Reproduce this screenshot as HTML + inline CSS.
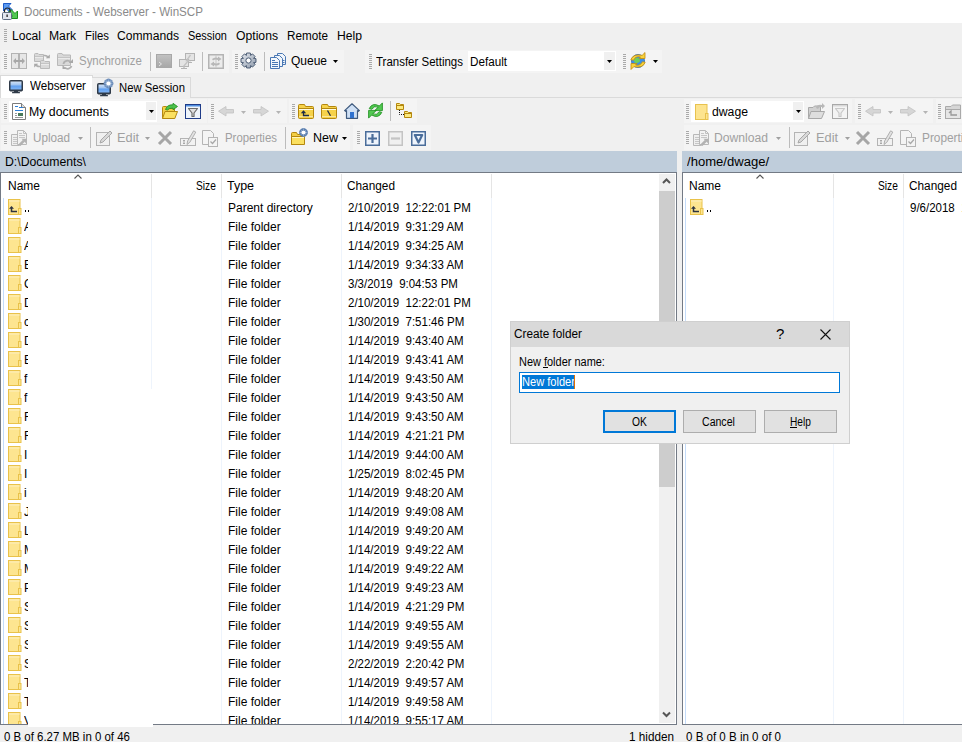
<!DOCTYPE html>
<html><head><meta charset="utf-8"><title>WinSCP</title>
<style>
html,body{margin:0;padding:0}
body{width:962px;height:742px;overflow:hidden;position:relative;background:#f0f0f0;font-family:"Liberation Sans",sans-serif}
.a{position:absolute}
.t{position:absolute;white-space:pre;font-size:12px;line-height:14px;transform-origin:0 0}
svg.a{overflow:visible}
</style></head><body>
<div class="a" style="left:0px;top:0px;width:962px;height:23px;background:#fff"></div>
<svg class="a" style="left:2px;top:3px" width="17" height="17" viewBox="0 0 17 17">
<path d="M1.5 0.5H9L6.5 3 10.5 7 8 9.5 4 5.5 1.5 8Z" fill="#5a9af2" stroke="#1e5bc6" stroke-width="1"/>
<path d="M15.5 8V15.5H8L10.5 13 6.5 9 9 6.5 13 10.5Z" fill="#52c852" stroke="#1a8f1a" stroke-width="1"/>
<path d="M2.5 9.5V7.8A2.8 2.8 0 0 1 8.1 7.8V9.5" fill="none" stroke="#222" stroke-width="1.2"/>
<rect x="0.5" y="9.5" width="9" height="7" rx="1" fill="#e2e6ee" stroke="#5d6b80" stroke-width="1"/>
<rect x="4.5" y="11.5" width="1.2" height="2.5" fill="#111"/>
</svg>
<div class="t" style="left:24px;top:5px;color:#8a8a8a;transform:scaleX(0.9666);">Documents - Webserver - WinSCP</div>
<div class="a" style="left:4px;top:29px;width:3px;height:1px;background:#a9a9a9"></div>
<div class="a" style="left:4px;top:31px;width:3px;height:1px;background:#a9a9a9"></div>
<div class="a" style="left:4px;top:33px;width:3px;height:1px;background:#a9a9a9"></div>
<div class="a" style="left:4px;top:35px;width:3px;height:1px;background:#a9a9a9"></div>
<div class="a" style="left:4px;top:37px;width:3px;height:1px;background:#a9a9a9"></div>
<div class="a" style="left:4px;top:39px;width:3px;height:1px;background:#a9a9a9"></div>
<div class="a" style="left:4px;top:41px;width:3px;height:1px;background:#a9a9a9"></div>
<div class="t" style="left:12px;top:29px;color:#000;transform:scaleX(1.0113);">Local</div>
<div class="t" style="left:49px;top:29px;color:#000;transform:scaleX(1.0128);">Mark</div>
<div class="t" style="left:85px;top:29px;color:#000;transform:scaleX(0.9448);">Files</div>
<div class="t" style="left:117px;top:29px;color:#000;transform:scaleX(1.0106);">Commands</div>
<div class="t" style="left:188px;top:29px;color:#000;transform:scaleX(0.9112);">Session</div>
<div class="t" style="left:236px;top:29px;color:#000;transform:scaleX(1.0159);">Options</div>
<div class="t" style="left:287px;top:29px;color:#000;transform:scaleX(0.9749);">Remote</div>
<div class="t" style="left:337px;top:29px;color:#000;transform:scaleX(1.0132);">Help</div>
<div class="a" style="left:1px;top:50px;width:228px;height:23px;background:#f4f4f4"></div>
<div class="a" style="left:232px;top:50px;width:112px;height:23px;background:#f4f4f4"></div>
<div class="a" style="left:365px;top:50px;width:257px;height:23px;background:#f4f4f4"></div>
<div class="a" style="left:620px;top:50px;width:42px;height:23px;background:#f4f4f4"></div>
<div class="a" style="left:4px;top:54px;width:3px;height:1px;background:#a9a9a9"></div>
<div class="a" style="left:4px;top:56px;width:3px;height:1px;background:#a9a9a9"></div>
<div class="a" style="left:4px;top:58px;width:3px;height:1px;background:#a9a9a9"></div>
<div class="a" style="left:4px;top:60px;width:3px;height:1px;background:#a9a9a9"></div>
<div class="a" style="left:4px;top:62px;width:3px;height:1px;background:#a9a9a9"></div>
<div class="a" style="left:4px;top:64px;width:3px;height:1px;background:#a9a9a9"></div>
<div class="a" style="left:4px;top:66px;width:3px;height:1px;background:#a9a9a9"></div>
<div class="a" style="left:4px;top:68px;width:3px;height:1px;background:#a9a9a9"></div>
<svg class="a" style="left:11px;top:53px" width="17" height="17" viewBox="0 0 17 17"><rect x="0.5" y="0.5" width="15" height="15" fill="#e6e6e6" stroke="#b4b4b4"/><rect x="7" y="1" width="2" height="14" fill="#b4b4b4"/>
<path d="M2 8L5 5V7H11V5L14 8 11 11V9H5V11Z" fill="#a8a8a8"/></svg>
<svg class="a" style="left:34px;top:53px" width="17" height="17" viewBox="0 0 17 17"><path d="M0.5 8.5V1.5Q0.5 0.5 1.5 0.5H4L5 1.5H9.5V8.5Z" fill="#d9d9d9" stroke="#b9b9b9"/><path d="M1 3.5H9" stroke="#c4c4c4"/><rect x="1" y="4" width="8" height="1" fill="#eaeaea"/><path d="M6.5 15.5V8.5Q6.5 7.5 7.5 7.5H10L11 8.5H15.5V15.5Z" fill="#d9d9d9" stroke="#b9b9b9"/><path d="M7 10.5H15" stroke="#c4c4c4"/><rect x="7" y="11" width="8" height="1" fill="#eaeaea"/><path d="M10 2.5Q13.5 2.2 14 5" fill="none" stroke="#b0b0b0" stroke-width="1.6"/><path d="M11.8 5.2H15.8V1.5Z" fill="#a8a8a8"/><path d="M6 13.5Q2.5 13.8 2 11" fill="none" stroke="#b0b0b0" stroke-width="1.6"/><path d="M4.2 10.8H0.2V14.5Z" fill="#a8a8a8"/></svg>
<svg class="a" style="left:57px;top:53px" width="17" height="17" viewBox="0 0 17 17"><path d="M0.5 12.5V1.5Q0.5 0.5 1.5 0.5H5L6 2H13.5V12.5Z" fill="#d9d9d9" stroke="#b9b9b9"/><path d="M1 4.5H13" stroke="#c4c4c4"/><rect x="1" y="5" width="12" height="1" fill="#eaeaea"/><path d="M6.5 11A3.8 3.8 0 0 1 13.5 9.5" fill="none" stroke="#b0b0b0" stroke-width="1.8"/><path d="M12 10H16V6Z" fill="#a8a8a8"/><path d="M14.5 13A3.8 3.8 0 0 1 8 14.5" fill="none" stroke="#b0b0b0" stroke-width="1.8"/><path d="M9.5 14H5.5V10Z" fill="#a8a8a8" transform="translate(0 2)"/></svg>
<div class="t" style="left:79px;top:54px;color:#a0a0a0;transform:scaleX(0.9532);">Synchronize</div>
<div class="a" style="left:150px;top:52px;width:1px;height:19px;background:#bcbcbc"></div>
<svg class="a" style="left:156px;top:54px" width="17" height="15" viewBox="0 0 17 15"><defs><linearGradient id="tg" x1="0" y1="0" x2="0" y2="1"><stop offset="0" stop-color="#c4c4c4"/><stop offset="1" stop-color="#a6a6a6"/></linearGradient></defs><rect x="0" y="0" width="16" height="14" fill="url(#tg)"/><rect x="0.5" y="0.5" width="15" height="13" fill="none" stroke="#a8a8a8"/><path d="M3 8L5.5 10 3 12" fill="none" stroke="#e6e6e6" stroke-width="1"/></svg>
<svg class="a" style="left:179px;top:53px" width="17" height="17" viewBox="0 0 17 17"><rect x="6.5" y="0.5" width="9" height="7" fill="#e4e4e4" stroke="#b4b4b4"/><path d="M11 8.5V9.5M9.5 9.5H13" stroke="#b4b4b4"/><rect x="0.5" y="6.5" width="9" height="7" fill="#e4e4e4" stroke="#b4b4b4"/><path d="M5 14V15M2 15.5H8" stroke="#b4b4b4" stroke-width="1.2"/><path d="M11.5 2L7.5 7.5H9.5L4.5 13.5" fill="none" stroke="#c2c2c2" stroke-width="1.3"/></svg>
<div class="a" style="left:202px;top:52px;width:1px;height:19px;background:#bcbcbc"></div>
<svg class="a" style="left:208px;top:54px" width="16" height="15" viewBox="0 0 16 15"><rect x="0.75" y="0.75" width="14.5" height="13.5" fill="#ececec" stroke="#b4b4b4" stroke-width="1.5"/><path d="M8 1V14" stroke="#c8c8c8"/><path d="M4 5Q7 2.5 10 4V2.5L13.5 5 10 7.5V6Q7 5 5 6.5Z" fill="#b8b8b8"/><path d="M12 10Q9 12.5 6 11V12.5L2.5 10 6 7.5V9Q9 10 11 8.5Z" fill="#b8b8b8"/></svg>
<div class="a" style="left:235px;top:54px;width:3px;height:1px;background:#a9a9a9"></div>
<div class="a" style="left:235px;top:56px;width:3px;height:1px;background:#a9a9a9"></div>
<div class="a" style="left:235px;top:58px;width:3px;height:1px;background:#a9a9a9"></div>
<div class="a" style="left:235px;top:60px;width:3px;height:1px;background:#a9a9a9"></div>
<div class="a" style="left:235px;top:62px;width:3px;height:1px;background:#a9a9a9"></div>
<div class="a" style="left:235px;top:64px;width:3px;height:1px;background:#a9a9a9"></div>
<div class="a" style="left:235px;top:66px;width:3px;height:1px;background:#a9a9a9"></div>
<div class="a" style="left:235px;top:68px;width:3px;height:1px;background:#a9a9a9"></div>
<svg class="a" style="left:240px;top:52px" width="17" height="17" viewBox="0 0 17 17"><defs><linearGradient id="gg" x1="0" y1="0" x2="1" y2="1"><stop offset="0" stop-color="#e4e8ee"/><stop offset="1" stop-color="#8e9aab"/></linearGradient></defs><path d="M6.22 3.39 L6.67 1.02 L10.33 1.02 L10.78 3.39 L10.50 3.27 L12.49 1.92 L15.08 4.51 L13.73 6.50 L13.61 6.22 L15.98 6.67 L15.98 10.33 L13.61 10.78 L13.73 10.50 L15.08 12.49 L12.49 15.08 L10.50 13.73 L10.78 13.61 L10.33 15.98 L6.67 15.98 L6.22 13.61 L6.50 13.73 L4.51 15.08 L1.92 12.49 L3.27 10.50 L3.39 10.78 L1.02 10.33 L1.02 6.67 L3.39 6.22 L3.27 6.50 L1.92 4.51 L4.51 1.92 L6.50 3.27Z" fill="url(#gg)" stroke="#4d5e75" stroke-width="1"/><circle cx="8.5" cy="8.5" r="2.6" fill="#fff" stroke="#4d5e75" stroke-width="1"/></svg>
<div class="a" style="left:264px;top:52px;width:1px;height:19px;background:#bcbcbc"></div>
<svg class="a" style="left:270px;top:53px" width="17" height="17" viewBox="0 0 17 17"><path d="M7.5 0.5H12.5L15.5 3.5V11.5H7.5Z" fill="#f0f5fb" stroke="#4a78b4"/><path d="M4.5 2.5H9.5L12.5 5.5V13.5H4.5Z" fill="#f0f5fb" stroke="#4a78b4"/><path d="M0.5 4.5H6.5L9.5 7.5V15.5H0.5Z" fill="#f4f8fc" stroke="#4a78b4"/><path d="M2 7.5H5M2 9.5H8M2 11.5H8M2 13.5H8" stroke="#4a78b4"/><path d="M13 7.5H14.5M13 9.5H14.5" stroke="#4a78b4"/></svg>
<div class="t" style="left:291px;top:54px;color:#000;">Queue</div>
<svg class="a" style="left:333px;top:60px" width="5" height="3" viewBox="0 0 5 3"><path d="M0 0H5L2.5 3Z" fill="#000"/></svg>
<div class="a" style="left:369px;top:54px;width:3px;height:1px;background:#a9a9a9"></div>
<div class="a" style="left:369px;top:56px;width:3px;height:1px;background:#a9a9a9"></div>
<div class="a" style="left:369px;top:58px;width:3px;height:1px;background:#a9a9a9"></div>
<div class="a" style="left:369px;top:60px;width:3px;height:1px;background:#a9a9a9"></div>
<div class="a" style="left:369px;top:62px;width:3px;height:1px;background:#a9a9a9"></div>
<div class="a" style="left:369px;top:64px;width:3px;height:1px;background:#a9a9a9"></div>
<div class="a" style="left:369px;top:66px;width:3px;height:1px;background:#a9a9a9"></div>
<div class="a" style="left:369px;top:68px;width:3px;height:1px;background:#a9a9a9"></div>
<div class="t" style="left:376px;top:55px;color:#000;transform:scaleX(0.9562);">Transfer Settings</div>
<div class="a" style="left:468px;top:51px;width:148px;height:20px;background:#fff"></div>
<div class="a" style="left:604px;top:52px;width:11px;height:18px;background:#f0f0f0"></div>
<svg class="a" style="left:607px;top:60px" width="5" height="3" viewBox="0 0 5 3"><path d="M0 0H5L2.5 3Z" fill="#000"/></svg>
<div class="t" style="left:470px;top:55px;color:#000;transform:scaleX(0.9722);">Default</div>
<div class="a" style="left:623px;top:54px;width:3px;height:1px;background:#a9a9a9"></div>
<div class="a" style="left:623px;top:56px;width:3px;height:1px;background:#a9a9a9"></div>
<div class="a" style="left:623px;top:58px;width:3px;height:1px;background:#a9a9a9"></div>
<div class="a" style="left:623px;top:60px;width:3px;height:1px;background:#a9a9a9"></div>
<div class="a" style="left:623px;top:62px;width:3px;height:1px;background:#a9a9a9"></div>
<div class="a" style="left:623px;top:64px;width:3px;height:1px;background:#a9a9a9"></div>
<div class="a" style="left:623px;top:66px;width:3px;height:1px;background:#a9a9a9"></div>
<div class="a" style="left:623px;top:68px;width:3px;height:1px;background:#a9a9a9"></div>
<svg class="a" style="left:629px;top:52px" width="18" height="18" viewBox="0 0 18 18"><circle cx="9" cy="9" r="6.6" fill="#3b8ee6" stroke="#2a68b8" stroke-width="0.7"/><path d="M4.5 7Q6 5 9 6T10.5 10Q8 11.5 5.5 10.5Z" fill="#6ccf5c"/><path d="M10.5 12Q13 11 14.8 12.5Q13 15 10.8 14.5Z" fill="#6ccf5c"/>
<path d="M1.8 7.8Q4 1.5 13.2 3.3L16 0.5V6.5H10L11.5 5Q6.5 3.8 4.6 8.2Z" fill="#f7d23c" stroke="#c48c0c" stroke-width="0.8" stroke-linejoin="round"/>
<path d="M16.2 10.2Q14 16.5 4.8 14.7L2 17.5V11.5H8L6.5 13Q11.5 14.2 13.4 9.8Z" fill="#f7d23c" stroke="#c48c0c" stroke-width="0.8" stroke-linejoin="round"/></svg>
<svg class="a" style="left:653px;top:60px" width="5" height="3" viewBox="0 0 5 3"><path d="M0 0H5L2.5 3Z" fill="#000"/></svg>
<div class="a" style="left:0px;top:97px;width:962px;height:1px;background:#dadada"></div>
<div class="a" style="left:0px;top:75px;width:93px;height:23px;background:#fff;box-sizing:border-box;border:1px solid #dadada;border-bottom:none"></div>
<div class="a" style="left:92px;top:77px;width:99px;height:21px;background:#f0f0f0;box-sizing:border-box;border:1px solid #dadada;border-bottom:none;border-left:none"></div>
<svg class="a" style="left:9px;top:80px" width="17" height="14" viewBox="0 0 17 14"><defs><linearGradient id="scr" x1="0" y1="0" x2="0" y2="1"><stop offset="0" stop-color="#d2e3f7"/><stop offset="0.45" stop-color="#9cc2f2"/><stop offset="0.55" stop-color="#5f9ff0"/><stop offset="1" stop-color="#7fb4f5"/></linearGradient></defs><rect x="0.5" y="0.5" width="13" height="10.5" rx="1" fill="#2f3a48" stroke="#2f3a48"/><rect x="1.5" y="1.5" width="11" height="8" fill="url(#scr)"/><rect x="5" y="11" width="4" height="1.2" fill="#2f3a48"/><rect x="3" y="12" width="8" height="1.3" rx="0.6" fill="#2f3a48"/></svg>
<div class="t" style="left:30px;top:79px;color:#000;transform:scaleX(0.9684);">Webserver</div>
<svg class="a" style="left:97px;top:83px" width="17" height="14" viewBox="0 0 17 14"><defs><linearGradient id="scr" x1="0" y1="0" x2="0" y2="1"><stop offset="0" stop-color="#d2e3f7"/><stop offset="0.45" stop-color="#9cc2f2"/><stop offset="0.55" stop-color="#5f9ff0"/><stop offset="1" stop-color="#7fb4f5"/></linearGradient></defs><rect x="0.5" y="0.5" width="13" height="10.5" rx="1" fill="#2f3a48" stroke="#2f3a48"/><rect x="1.5" y="1.5" width="11" height="8" fill="url(#scr)"/><rect x="5" y="11" width="4" height="1.2" fill="#2f3a48"/><rect x="3" y="12" width="8" height="1.3" rx="0.6" fill="#2f3a48"/><path d="M10.28 -2.24 L10.50 -3.99 L12.50 -3.99 L12.72 -2.24 L12.57 -2.30 L13.96 -3.38 L15.38 -1.96 L14.30 -0.57 L14.24 -0.72 L15.99 -0.50 L15.99 1.50 L14.24 1.72 L14.30 1.57 L15.38 2.96 L13.96 4.38 L12.57 3.30 L12.72 3.24 L12.50 4.99 L10.50 4.99 L10.28 3.24 L10.43 3.30 L9.04 4.38 L7.62 2.96 L8.70 1.57 L8.76 1.72 L7.01 1.50 L7.01 -0.50 L8.76 -0.72 L8.70 -0.57 L7.62 -1.96 L9.04 -3.38 L10.43 -2.30Z" fill="#8fabd0" stroke="#5a7fb0" stroke-width="0.8"/><circle cx="11.5" cy="0.5" r="2.1" fill="#fff"/></svg>
<div class="t" style="left:119px;top:81px;color:#000;transform:scaleX(0.9416);">New Session</div>
<div class="a" style="left:1px;top:99px;width:206px;height:24px;background:#f4f4f4"></div>
<div class="a" style="left:208px;top:99px;width:79px;height:24px;background:#f4f4f4"></div>
<div class="a" style="left:289px;top:99px;width:128px;height:24px;background:#f4f4f4"></div>
<div class="a" style="left:1px;top:125px;width:349px;height:25px;background:#f4f4f4"></div>
<div class="a" style="left:353px;top:125px;width:78px;height:25px;background:#f4f4f4"></div>
<div class="a" style="left:4px;top:104px;width:3px;height:1px;background:#a9a9a9"></div>
<div class="a" style="left:4px;top:106px;width:3px;height:1px;background:#a9a9a9"></div>
<div class="a" style="left:4px;top:108px;width:3px;height:1px;background:#a9a9a9"></div>
<div class="a" style="left:4px;top:110px;width:3px;height:1px;background:#a9a9a9"></div>
<div class="a" style="left:4px;top:112px;width:3px;height:1px;background:#a9a9a9"></div>
<div class="a" style="left:4px;top:114px;width:3px;height:1px;background:#a9a9a9"></div>
<div class="a" style="left:4px;top:116px;width:3px;height:1px;background:#a9a9a9"></div>
<div class="a" style="left:4px;top:118px;width:3px;height:1px;background:#a9a9a9"></div>
<div class="a" style="left:9px;top:101px;width:148px;height:21px;background:#fff"></div>
<div class="a" style="left:146px;top:102px;width:10px;height:18px;background:#f0f0f0"></div>
<svg class="a" style="left:149px;top:110px" width="5" height="3" viewBox="0 0 5 3"><path d="M0 0H5L2.5 3Z" fill="#000"/></svg>
<svg class="a" style="left:12px;top:103px" width="14" height="17" viewBox="0 0 14 17"><path d="M0.5 0.5H9.5L13.5 4.5V16.5H0.5Z" fill="#fff" stroke="#7b7b7b"/><path d="M9.5 0.5V4.5H13.5" fill="#ddd" stroke="#7b7b7b"/><path d="M3 7.5H11" stroke="#2d7fd6" stroke-width="1"/><path d="M3 3.5H6M7 4.5H11" stroke="#2d7fd6"/><path d="M3 10.5H5M3 12.5H5M3 14.5H11" stroke="#999"/><rect x="6" y="10" width="5" height="3" fill="#4a7a5a"/></svg>
<div class="t" style="left:29px;top:105px;color:#000;transform:scaleX(1.0256);">My documents</div>
<svg class="a" style="left:161px;top:103px" width="18" height="17" viewBox="0 0 18 17"><path d="M1.5 15.5V4.5Q1.5 3.5 2.5 3.5H5.5L6.5 5H13.5V8.5" fill="#f3cf45" stroke="#b4870e"/><path d="M1.5 15.5L4 8.5H16.5L13.8 15.5Z" fill="#fbe060" stroke="#b4870e"/><path d="M4.5 6.5Q6 1.5 12 1.8V0.3L16.5 3.5 12 6.8V5.2Q8 5 6.5 7Z" fill="#4cc04c" stroke="#1c8a1c" stroke-width="0.8"/></svg>
<svg class="a" style="left:185px;top:104px" width="17" height="16" viewBox="0 0 17 16"><rect x="0.5" y="0.5" width="15" height="14" fill="#eef4fb" stroke="#1f3c88"/><rect x="1" y="1" width="14" height="1.5" fill="#4f8ee0"/><path d="M3.5 4.5H12.5L9 9V12.5H7V9Z" fill="#e0e0e0" stroke="#6b6b6b" stroke-width="1.2" stroke-linejoin="round"/></svg>
<div class="a" style="left:211px;top:104px;width:3px;height:1px;background:#a9a9a9"></div>
<div class="a" style="left:211px;top:106px;width:3px;height:1px;background:#a9a9a9"></div>
<div class="a" style="left:211px;top:108px;width:3px;height:1px;background:#a9a9a9"></div>
<div class="a" style="left:211px;top:110px;width:3px;height:1px;background:#a9a9a9"></div>
<div class="a" style="left:211px;top:112px;width:3px;height:1px;background:#a9a9a9"></div>
<div class="a" style="left:211px;top:114px;width:3px;height:1px;background:#a9a9a9"></div>
<div class="a" style="left:211px;top:116px;width:3px;height:1px;background:#a9a9a9"></div>
<div class="a" style="left:211px;top:118px;width:3px;height:1px;background:#a9a9a9"></div>
<svg class="a" style="left:218px;top:106px" width="16" height="11" viewBox="0 0 16 11"><path d="M0.5 5.2L8 0.5V3.5H15.5V7H8V10Z" fill="#d6d6d6" stroke="#c2c2c2" stroke-width="0.8" stroke-linejoin="round"/></svg>
<svg class="a" style="left:241px;top:111px" width="5" height="3" viewBox="0 0 5 3"><path d="M0 0H5L2.5 3Z" fill="#b4b4b4"/></svg>
<svg class="a" style="left:253px;top:106px" width="16" height="11" viewBox="0 0 16 11"><path d="M15.5 5.2L8 0.5V3.5H0.5V7H8V10Z" fill="#d6d6d6" stroke="#c2c2c2" stroke-width="0.8" stroke-linejoin="round"/></svg>
<svg class="a" style="left:276px;top:111px" width="5" height="3" viewBox="0 0 5 3"><path d="M0 0H5L2.5 3Z" fill="#b4b4b4"/></svg>
<div class="a" style="left:292px;top:104px;width:3px;height:1px;background:#a9a9a9"></div>
<div class="a" style="left:292px;top:106px;width:3px;height:1px;background:#a9a9a9"></div>
<div class="a" style="left:292px;top:108px;width:3px;height:1px;background:#a9a9a9"></div>
<div class="a" style="left:292px;top:110px;width:3px;height:1px;background:#a9a9a9"></div>
<div class="a" style="left:292px;top:112px;width:3px;height:1px;background:#a9a9a9"></div>
<div class="a" style="left:292px;top:114px;width:3px;height:1px;background:#a9a9a9"></div>
<div class="a" style="left:292px;top:116px;width:3px;height:1px;background:#a9a9a9"></div>
<div class="a" style="left:292px;top:118px;width:3px;height:1px;background:#a9a9a9"></div>
<svg class="a" style="left:298px;top:104px" width="16" height="15" viewBox="0 0 16 15"><path d="M0.5 13.5V1.5Q0.5 0.5 1.5 0.5H6.5L7.5 2.5H14.5Q15.5 2.5 15.5 3.5V13.5Q15.5 14.5 14.5 14.5H1.5Q0.5 14.5 0.5 13.5Z" fill="#f6d24a" stroke="#b4870e"/><path d="M1 4.5H15" stroke="#b4870e"/><path d="M1 5.5H15" stroke="#fffbe0"/><path d="M1 12.5H15" stroke="#fbe79a"/><path d="M5.5 8.5V11.5H11" fill="none" stroke="#1f2b45" stroke-width="1.3"/><path d="M2.8 9.3L5.5 6.3 8.2 9.3Z" fill="#1f2b45"/></svg>
<svg class="a" style="left:321px;top:104px" width="16" height="15" viewBox="0 0 16 15"><path d="M0.5 13.5V1.5Q0.5 0.5 1.5 0.5H6.5L7.5 2.5H14.5Q15.5 2.5 15.5 3.5V13.5Q15.5 14.5 14.5 14.5H1.5Q0.5 14.5 0.5 13.5Z" fill="#f6d24a" stroke="#b4870e"/><path d="M1 4.5H15" stroke="#b4870e"/><path d="M1 5.5H15" stroke="#fffbe0"/><path d="M1 12.5H15" stroke="#fbe79a"/><path d="M6.5 6.5L9.5 11.8" stroke="#1f2b45" stroke-width="1.3"/></svg>
<svg class="a" style="left:344px;top:103px" width="17" height="16" viewBox="0 0 17 16"><path d="M8 0.8L0.6 7.6 1.6 8.3 2.5 7.6V15.3H13.5V7.6L14.4 8.3 15.4 7.6Z" fill="#cfe0f5" stroke="#3f5a7e" stroke-width="1.2" stroke-linejoin="round"/><rect x="6" y="9" width="4" height="6" fill="#2f72d0"/></svg>
<svg class="a" style="left:368px;top:103px" width="16" height="16" viewBox="0 0 16 16"><path d="M1.2 5.6Q4.5 -1 11.3 3L14.4 -0.1V7.6H6.7L10.2 4.1Q6.5 2.3 3.6 6.3Z" fill="#52c852" stroke="#158a15" stroke-width="0.8" stroke-linejoin="round"/><path d="M13.8 9.4Q10.5 16 3.7 12L0.6 15.1V7.4H8.3L4.8 10.9Q8.5 12.7 11.4 8.7Z" fill="#52c852" stroke="#158a15" stroke-width="0.8" stroke-linejoin="round"/></svg>
<div class="a" style="left:390px;top:101px;width:1px;height:20px;background:#bcbcbc"></div>
<svg class="a" style="left:395px;top:102px" width="18" height="17" viewBox="0 0 18 17"><path d="M1.5 1.5H4.5L5.5 2.5H8.5V7.5H1.5Z" fill="#fce97e" stroke="#b4870e"/><path d="M2 3.5H8" stroke="#b4870e"/><path d="M9.5 9.5H12.5L13.5 10.5H16.5V15.5H9.5Z" fill="#fce97e" stroke="#b4870e"/><path d="M10 11.5H16" stroke="#b4870e"/><path d="M4.5 8V12.5H9" fill="none" stroke="#111" stroke-dasharray="1 1"/></svg>
<div class="a" style="left:4px;top:131px;width:3px;height:1px;background:#a9a9a9"></div>
<div class="a" style="left:4px;top:133px;width:3px;height:1px;background:#a9a9a9"></div>
<div class="a" style="left:4px;top:135px;width:3px;height:1px;background:#a9a9a9"></div>
<div class="a" style="left:4px;top:137px;width:3px;height:1px;background:#a9a9a9"></div>
<div class="a" style="left:4px;top:139px;width:3px;height:1px;background:#a9a9a9"></div>
<div class="a" style="left:4px;top:141px;width:3px;height:1px;background:#a9a9a9"></div>
<div class="a" style="left:4px;top:143px;width:3px;height:1px;background:#a9a9a9"></div>
<svg class="a" style="left:11px;top:130px" width="17" height="17" viewBox="0 0 17 17"><path d="M0.5 4.5H8.5V15.5H0.5Z" fill="#efefef" stroke="#b8b8b8"/><path d="M2 7.5H6M2 9.5H7M2 11.5H7M2 13.5H7" stroke="#c6c6c6"/><path d="M6.5 0.5H12.5L15.5 3.5V14.5H6.5Z" fill="#f2f2f2" stroke="#b8b8b8"/><path d="M12.5 0.5V3.5H15.5" fill="none" stroke="#c0c0c0"/><path d="M8 3.5H11M8 5.5H14M8 7.5H14" stroke="#c6c6c6"/><path d="M8.5 15.2L13 10.7" stroke="#b2b2b2" stroke-width="2.6"/><path d="M10.5 8.8H15.5V13.8Z" fill="#b2b2b2"/></svg>
<div class="t" style="left:33px;top:131px;color:#a0a0a0;transform:scaleX(0.9722);">Upload</div>
<svg class="a" style="left:78px;top:137px" width="5" height="3" viewBox="0 0 5 3"><path d="M0 0H5L2.5 3Z" fill="#a0a0a0"/></svg>
<div class="a" style="left:90px;top:127px;width:1px;height:21px;background:#bcbcbc"></div>
<svg class="a" style="left:96px;top:130px" width="17" height="17" viewBox="0 0 17 17"><rect x="0.5" y="2.5" width="13" height="13" fill="#f0f0f0" stroke="#b4b4b4"/><path d="M4 13L5 10 14 1 16 3 7 12Z" fill="#d8d8d8" stroke="#a8a8a8"/></svg>
<div class="t" style="left:117px;top:131px;color:#a0a0a0;transform:scaleX(1.0667);">Edit</div>
<svg class="a" style="left:145px;top:137px" width="5" height="3" viewBox="0 0 5 3"><path d="M0 0H5L2.5 3Z" fill="#a0a0a0"/></svg>
<svg class="a" style="left:157px;top:130px" width="16" height="16" viewBox="0 0 16 16"><path d="M2 2L14 14M14 2L2 14" stroke="#a6a6a6" stroke-width="3"/></svg>
<svg class="a" style="left:180px;top:129px" width="17" height="17" viewBox="0 0 17 17"><rect x="0.5" y="9.5" width="15" height="7" fill="#f2f2f2" stroke="#b4b4b4"/><path d="M3 11.5H5M4 11.5V14.5M3 14.5H5" stroke="#a8a8a8"/><path d="M7 15.5L7.6 12 13.6 1.8 15.8 3.1 9.8 13.3Z" fill="#e2e2e2" stroke="#a8a8a8" stroke-width="0.9" stroke-linejoin="round"/></svg>
<svg class="a" style="left:202px;top:130px" width="17" height="17" viewBox="0 0 17 17"><path d="M0.5 0.5H8.5L11.5 3.5V14.5H0.5Z" fill="#f4f4f4" stroke="#b4b4b4"/><rect x="6.5" y="7.5" width="9" height="9" fill="#f4f4f4" stroke="#b4b4b4"/><path d="M8.5 11.5L10.5 13.5 14 9.5" fill="none" stroke="#a8a8a8" stroke-width="1.2"/></svg>
<div class="t" style="left:225px;top:131px;color:#a0a0a0;transform:scaleX(0.9497);">Properties</div>
<div class="a" style="left:285px;top:127px;width:1px;height:22px;background:#bcbcbc"></div>
<svg class="a" style="left:291px;top:128px" width="17" height="18" viewBox="0 0 17 18"><path d="M0.5 16.5V5.5Q0.5 4.5 1.5 4.5H5.5L6.5 6.5H10V16.5Z" fill="#f3cf45" stroke="#b4870e"/><path d="M0.5 8.5H13.5V16.5H0.5Z" fill="#fbe060" stroke="#b4870e"/><path d="M1 9.5H13" stroke="#fff6c0"/><path d="M11.37 2.16 L11.56 0.82 L13.44 0.82 L13.63 2.16 L13.36 2.04 L14.44 1.23 L15.77 2.56 L14.96 3.64 L14.84 3.37 L16.18 3.56 L16.18 5.44 L14.84 5.63 L14.96 5.36 L15.77 6.44 L14.44 7.77 L13.36 6.96 L13.63 6.84 L13.44 8.18 L11.56 8.18 L11.37 6.84 L11.64 6.96 L10.56 7.77 L9.23 6.44 L10.04 5.36 L10.16 5.63 L8.82 5.44 L8.82 3.56 L10.16 3.37 L10.04 3.64 L9.23 2.56 L10.56 1.23 L11.64 2.04Z" fill="#fff" stroke="#5a7fb0" stroke-width="1.2"/><circle cx="12.5" cy="4.5" r="1.2" fill="#fff"/></svg>
<div class="t" style="left:313px;top:131px;color:#000;transform:scaleX(1.0428);">New</div>
<svg class="a" style="left:342px;top:137px" width="5" height="3" viewBox="0 0 5 3"><path d="M0 0H5L2.5 3Z" fill="#000"/></svg>
<div class="a" style="left:357px;top:131px;width:3px;height:1px;background:#a9a9a9"></div>
<div class="a" style="left:357px;top:133px;width:3px;height:1px;background:#a9a9a9"></div>
<div class="a" style="left:357px;top:135px;width:3px;height:1px;background:#a9a9a9"></div>
<div class="a" style="left:357px;top:137px;width:3px;height:1px;background:#a9a9a9"></div>
<div class="a" style="left:357px;top:139px;width:3px;height:1px;background:#a9a9a9"></div>
<div class="a" style="left:357px;top:141px;width:3px;height:1px;background:#a9a9a9"></div>
<div class="a" style="left:357px;top:143px;width:3px;height:1px;background:#a9a9a9"></div>
<svg class="a" style="left:365px;top:131px" width="15" height="15" viewBox="0 0 15 15"><rect x="0.75" y="0.75" width="13.5" height="13.5" fill="#eef4fc" stroke="#4a6d9a" stroke-width="1.5"/><path d="M7.5 3V12M3 7.5H12" stroke="#4a6d9a" stroke-width="2.2"/></svg>
<svg class="a" style="left:388px;top:131px" width="15" height="15" viewBox="0 0 15 15"><rect x="0.75" y="0.75" width="13.5" height="13.5" fill="#f0f0f0" stroke="#c4c4c4" stroke-width="1.5"/><path d="M3 7.5H12" stroke="#c4c4c4" stroke-width="2.2"/></svg>
<svg class="a" style="left:411px;top:131px" width="15" height="15" viewBox="0 0 15 15"><rect x="0.75" y="0.75" width="13.5" height="13.5" fill="#eef4fc" stroke="#4a6d9a" stroke-width="1.5"/><path d="M3.8 4H11.2L7.5 11.5Z" fill="none" stroke="#4a6d9a" stroke-width="2.2" stroke-linejoin="round"/></svg>
<div class="a" style="left:0px;top:151px;width:677px;height:21px;background:#bfcddb"></div>
<div class="t" style="left:5px;top:155px;color:#000;transform:scaleX(1.0209);">D:\Documents\</div>
<div class="a" style="left:0px;top:172px;width:677px;height:1px;background:#737a85"></div>
<div class="a" style="left:0px;top:173px;width:677px;height:552px;background:#fff"></div>
<div class="a" style="left:0px;top:172px;width:1px;height:553px;background:#737a85"></div>
<div class="a" style="left:676px;top:172px;width:1px;height:553px;background:#737a85"></div>
<div class="a" style="left:0px;top:724px;width:677px;height:1px;background:#737a85"></div>
<div class="a" style="left:151px;top:174px;width:1px;height:24px;background:#e5e5e5"></div>
<div class="a" style="left:221px;top:174px;width:1px;height:24px;background:#e5e5e5"></div>
<div class="a" style="left:341px;top:174px;width:1px;height:24px;background:#e5e5e5"></div>
<div class="a" style="left:491px;top:174px;width:1px;height:24px;background:#e5e5e5"></div>
<div class="t" style="left:8px;top:179px;color:#000;">Name</div>
<svg class="a" style="left:74px;top:174px" width="8" height="5" viewBox="0 0 8 5"><path d="M0.5 4.5L4 1 7.5 4.5" fill="none" stroke="#555" stroke-width="1.1"/></svg>
<div class="t" style="left:196px;top:179px;color:#000;transform:scaleX(0.8503);">Size</div>
<div class="t" style="left:227px;top:179px;color:#000;transform:scaleX(1.0394);">Type</div>
<div class="t" style="left:347px;top:179px;color:#000;transform:scaleX(0.9849);">Changed</div>
<div class="a" style="left:3px;top:198px;width:1px;height:526px;background:#c4dcfa"></div>
<div class="a" style="left:151px;top:198px;width:1px;height:191px;background:#eef4fc"></div>
<div class="a" style="left:221px;top:198px;width:1px;height:526px;background:#eef4fc"></div>
<div class="a" style="left:341px;top:198px;width:1px;height:526px;background:#eef4fc"></div>
<div class="a" style="left:491px;top:198px;width:1px;height:526px;background:#eef4fc"></div>
<div class="a" style="left:0;top:0;width:676px;height:724px;overflow:hidden">
<svg class="a" style="left:8px;top:199px" width="14" height="17" viewBox="0 0 14 17"><rect x="0.5" y="0.5" width="11.5" height="15" fill="#fde590" stroke="#e9c24a"/><rect x="10.5" y="9.5" width="2.5" height="6" fill="#fde590" stroke="#e9c24a"/><rect x="1" y="1" width="10.5" height="2" fill="#fdeaa8"/><path d="M3.5 9V12.5H9" fill="none" stroke="#2e3440" stroke-width="1.5"/><path d="M1 9.8L3.5 7 6 9.8Z" fill="#2e3440"/></svg>
<svg class="a" style="left:8px;top:218px" width="14" height="17" viewBox="0 0 14 17"><rect x="0.5" y="0.5" width="11.5" height="15" fill="#fde590" stroke="#e9c24a"/><rect x="10.5" y="9.5" width="2.5" height="6" fill="#fde590" stroke="#e9c24a"/><rect x="1" y="1" width="10.5" height="2" fill="#fdeaa8"/></svg>
<svg class="a" style="left:8px;top:237px" width="14" height="17" viewBox="0 0 14 17"><rect x="0.5" y="0.5" width="11.5" height="15" fill="#fde590" stroke="#e9c24a"/><rect x="10.5" y="9.5" width="2.5" height="6" fill="#fde590" stroke="#e9c24a"/><rect x="1" y="1" width="10.5" height="2" fill="#fdeaa8"/></svg>
<svg class="a" style="left:8px;top:256px" width="14" height="17" viewBox="0 0 14 17"><rect x="0.5" y="0.5" width="11.5" height="15" fill="#fde590" stroke="#e9c24a"/><rect x="10.5" y="9.5" width="2.5" height="6" fill="#fde590" stroke="#e9c24a"/><rect x="1" y="1" width="10.5" height="2" fill="#fdeaa8"/></svg>
<svg class="a" style="left:8px;top:275px" width="14" height="17" viewBox="0 0 14 17"><rect x="0.5" y="0.5" width="11.5" height="15" fill="#fde590" stroke="#e9c24a"/><rect x="10.5" y="9.5" width="2.5" height="6" fill="#fde590" stroke="#e9c24a"/><rect x="1" y="1" width="10.5" height="2" fill="#fdeaa8"/></svg>
<svg class="a" style="left:8px;top:294px" width="14" height="17" viewBox="0 0 14 17"><rect x="0.5" y="0.5" width="11.5" height="15" fill="#fde590" stroke="#e9c24a"/><rect x="10.5" y="9.5" width="2.5" height="6" fill="#fde590" stroke="#e9c24a"/><rect x="1" y="1" width="10.5" height="2" fill="#fdeaa8"/></svg>
<svg class="a" style="left:8px;top:313px" width="14" height="17" viewBox="0 0 14 17"><rect x="0.5" y="0.5" width="11.5" height="15" fill="#fde590" stroke="#e9c24a"/><rect x="10.5" y="9.5" width="2.5" height="6" fill="#fde590" stroke="#e9c24a"/><rect x="1" y="1" width="10.5" height="2" fill="#fdeaa8"/></svg>
<svg class="a" style="left:8px;top:332px" width="14" height="17" viewBox="0 0 14 17"><rect x="0.5" y="0.5" width="11.5" height="15" fill="#fde590" stroke="#e9c24a"/><rect x="10.5" y="9.5" width="2.5" height="6" fill="#fde590" stroke="#e9c24a"/><rect x="1" y="1" width="10.5" height="2" fill="#fdeaa8"/></svg>
<svg class="a" style="left:8px;top:351px" width="14" height="17" viewBox="0 0 14 17"><rect x="0.5" y="0.5" width="11.5" height="15" fill="#fde590" stroke="#e9c24a"/><rect x="10.5" y="9.5" width="2.5" height="6" fill="#fde590" stroke="#e9c24a"/><rect x="1" y="1" width="10.5" height="2" fill="#fdeaa8"/></svg>
<svg class="a" style="left:8px;top:370px" width="14" height="17" viewBox="0 0 14 17"><rect x="0.5" y="0.5" width="11.5" height="15" fill="#fde590" stroke="#e9c24a"/><rect x="10.5" y="9.5" width="2.5" height="6" fill="#fde590" stroke="#e9c24a"/><rect x="1" y="1" width="10.5" height="2" fill="#fdeaa8"/></svg>
<svg class="a" style="left:8px;top:389px" width="14" height="17" viewBox="0 0 14 17"><rect x="0.5" y="0.5" width="11.5" height="15" fill="#fde590" stroke="#e9c24a"/><rect x="10.5" y="9.5" width="2.5" height="6" fill="#fde590" stroke="#e9c24a"/><rect x="1" y="1" width="10.5" height="2" fill="#fdeaa8"/></svg>
<svg class="a" style="left:8px;top:408px" width="14" height="17" viewBox="0 0 14 17"><rect x="0.5" y="0.5" width="11.5" height="15" fill="#fde590" stroke="#e9c24a"/><rect x="10.5" y="9.5" width="2.5" height="6" fill="#fde590" stroke="#e9c24a"/><rect x="1" y="1" width="10.5" height="2" fill="#fdeaa8"/></svg>
<svg class="a" style="left:8px;top:427px" width="14" height="17" viewBox="0 0 14 17"><rect x="0.5" y="0.5" width="11.5" height="15" fill="#fde590" stroke="#e9c24a"/><rect x="10.5" y="9.5" width="2.5" height="6" fill="#fde590" stroke="#e9c24a"/><rect x="1" y="1" width="10.5" height="2" fill="#fdeaa8"/></svg>
<svg class="a" style="left:8px;top:446px" width="14" height="17" viewBox="0 0 14 17"><rect x="0.5" y="0.5" width="11.5" height="15" fill="#fde590" stroke="#e9c24a"/><rect x="10.5" y="9.5" width="2.5" height="6" fill="#fde590" stroke="#e9c24a"/><rect x="1" y="1" width="10.5" height="2" fill="#fdeaa8"/></svg>
<svg class="a" style="left:8px;top:465px" width="14" height="17" viewBox="0 0 14 17"><rect x="0.5" y="0.5" width="11.5" height="15" fill="#fde590" stroke="#e9c24a"/><rect x="10.5" y="9.5" width="2.5" height="6" fill="#fde590" stroke="#e9c24a"/><rect x="1" y="1" width="10.5" height="2" fill="#fdeaa8"/></svg>
<svg class="a" style="left:8px;top:484px" width="14" height="17" viewBox="0 0 14 17"><rect x="0.5" y="0.5" width="11.5" height="15" fill="#fde590" stroke="#e9c24a"/><rect x="10.5" y="9.5" width="2.5" height="6" fill="#fde590" stroke="#e9c24a"/><rect x="1" y="1" width="10.5" height="2" fill="#fdeaa8"/></svg>
<svg class="a" style="left:8px;top:503px" width="14" height="17" viewBox="0 0 14 17"><rect x="0.5" y="0.5" width="11.5" height="15" fill="#fde590" stroke="#e9c24a"/><rect x="10.5" y="9.5" width="2.5" height="6" fill="#fde590" stroke="#e9c24a"/><rect x="1" y="1" width="10.5" height="2" fill="#fdeaa8"/></svg>
<svg class="a" style="left:8px;top:522px" width="14" height="17" viewBox="0 0 14 17"><rect x="0.5" y="0.5" width="11.5" height="15" fill="#fde590" stroke="#e9c24a"/><rect x="10.5" y="9.5" width="2.5" height="6" fill="#fde590" stroke="#e9c24a"/><rect x="1" y="1" width="10.5" height="2" fill="#fdeaa8"/></svg>
<svg class="a" style="left:8px;top:541px" width="14" height="17" viewBox="0 0 14 17"><rect x="0.5" y="0.5" width="11.5" height="15" fill="#fde590" stroke="#e9c24a"/><rect x="10.5" y="9.5" width="2.5" height="6" fill="#fde590" stroke="#e9c24a"/><rect x="1" y="1" width="10.5" height="2" fill="#fdeaa8"/></svg>
<svg class="a" style="left:8px;top:560px" width="14" height="17" viewBox="0 0 14 17"><rect x="0.5" y="0.5" width="11.5" height="15" fill="#fde590" stroke="#e9c24a"/><rect x="10.5" y="9.5" width="2.5" height="6" fill="#fde590" stroke="#e9c24a"/><rect x="1" y="1" width="10.5" height="2" fill="#fdeaa8"/></svg>
<svg class="a" style="left:8px;top:579px" width="14" height="17" viewBox="0 0 14 17"><rect x="0.5" y="0.5" width="11.5" height="15" fill="#fde590" stroke="#e9c24a"/><rect x="10.5" y="9.5" width="2.5" height="6" fill="#fde590" stroke="#e9c24a"/><rect x="1" y="1" width="10.5" height="2" fill="#fdeaa8"/></svg>
<svg class="a" style="left:8px;top:598px" width="14" height="17" viewBox="0 0 14 17"><rect x="0.5" y="0.5" width="11.5" height="15" fill="#fde590" stroke="#e9c24a"/><rect x="10.5" y="9.5" width="2.5" height="6" fill="#fde590" stroke="#e9c24a"/><rect x="1" y="1" width="10.5" height="2" fill="#fdeaa8"/></svg>
<svg class="a" style="left:8px;top:617px" width="14" height="17" viewBox="0 0 14 17"><rect x="0.5" y="0.5" width="11.5" height="15" fill="#fde590" stroke="#e9c24a"/><rect x="10.5" y="9.5" width="2.5" height="6" fill="#fde590" stroke="#e9c24a"/><rect x="1" y="1" width="10.5" height="2" fill="#fdeaa8"/></svg>
<svg class="a" style="left:8px;top:636px" width="14" height="17" viewBox="0 0 14 17"><rect x="0.5" y="0.5" width="11.5" height="15" fill="#fde590" stroke="#e9c24a"/><rect x="10.5" y="9.5" width="2.5" height="6" fill="#fde590" stroke="#e9c24a"/><rect x="1" y="1" width="10.5" height="2" fill="#fdeaa8"/></svg>
<svg class="a" style="left:8px;top:655px" width="14" height="17" viewBox="0 0 14 17"><rect x="0.5" y="0.5" width="11.5" height="15" fill="#fde590" stroke="#e9c24a"/><rect x="10.5" y="9.5" width="2.5" height="6" fill="#fde590" stroke="#e9c24a"/><rect x="1" y="1" width="10.5" height="2" fill="#fdeaa8"/></svg>
<svg class="a" style="left:8px;top:674px" width="14" height="17" viewBox="0 0 14 17"><rect x="0.5" y="0.5" width="11.5" height="15" fill="#fde590" stroke="#e9c24a"/><rect x="10.5" y="9.5" width="2.5" height="6" fill="#fde590" stroke="#e9c24a"/><rect x="1" y="1" width="10.5" height="2" fill="#fdeaa8"/></svg>
<svg class="a" style="left:8px;top:693px" width="14" height="17" viewBox="0 0 14 17"><rect x="0.5" y="0.5" width="11.5" height="15" fill="#fde590" stroke="#e9c24a"/><rect x="10.5" y="9.5" width="2.5" height="6" fill="#fde590" stroke="#e9c24a"/><rect x="1" y="1" width="10.5" height="2" fill="#fdeaa8"/></svg>
<svg class="a" style="left:8px;top:712px" width="14" height="17" viewBox="0 0 14 17"><rect x="0.5" y="0.5" width="11.5" height="15" fill="#fde590" stroke="#e9c24a"/><rect x="10.5" y="9.5" width="2.5" height="6" fill="#fde590" stroke="#e9c24a"/><rect x="1" y="1" width="10.5" height="2" fill="#fdeaa8"/></svg>
</div>
<div class="a" style="left:1px;top:198px;width:675px;height:526px;overflow:hidden">
<div class="t" style="left:227px;top:3px;color:#000;">Parent directory</div>
<div class="t" style="left:347px;top:3px;color:#000;transform:scaleX(0.958)">2/10/2019  12:22:01 PM</div>
<div class="t" style="left:227px;top:22px;color:#000;">File folder</div>
<div class="t" style="left:347px;top:22px;color:#000;transform:scaleX(0.958)">1/14/2019  9:31:29 AM</div>
<div class="t" style="left:227px;top:41px;color:#000;">File folder</div>
<div class="t" style="left:347px;top:41px;color:#000;transform:scaleX(0.958)">1/14/2019  9:34:25 AM</div>
<div class="t" style="left:227px;top:60px;color:#000;">File folder</div>
<div class="t" style="left:347px;top:60px;color:#000;transform:scaleX(0.958)">1/14/2019  9:34:33 AM</div>
<div class="t" style="left:227px;top:79px;color:#000;">File folder</div>
<div class="t" style="left:347px;top:79px;color:#000;transform:scaleX(0.958)">3/3/2019  9:04:53 PM</div>
<div class="t" style="left:227px;top:98px;color:#000;">File folder</div>
<div class="t" style="left:347px;top:98px;color:#000;transform:scaleX(0.958)">2/10/2019  12:22:01 PM</div>
<div class="t" style="left:227px;top:117px;color:#000;">File folder</div>
<div class="t" style="left:347px;top:117px;color:#000;transform:scaleX(0.958)">1/30/2019  7:51:46 PM</div>
<div class="t" style="left:227px;top:136px;color:#000;">File folder</div>
<div class="t" style="left:347px;top:136px;color:#000;transform:scaleX(0.958)">1/14/2019  9:43:40 AM</div>
<div class="t" style="left:227px;top:155px;color:#000;">File folder</div>
<div class="t" style="left:347px;top:155px;color:#000;transform:scaleX(0.958)">1/14/2019  9:43:41 AM</div>
<div class="t" style="left:227px;top:174px;color:#000;">File folder</div>
<div class="t" style="left:347px;top:174px;color:#000;transform:scaleX(0.958)">1/14/2019  9:43:50 AM</div>
<div class="t" style="left:227px;top:193px;color:#000;">File folder</div>
<div class="t" style="left:347px;top:193px;color:#000;transform:scaleX(0.958)">1/14/2019  9:43:50 AM</div>
<div class="t" style="left:227px;top:212px;color:#000;">File folder</div>
<div class="t" style="left:347px;top:212px;color:#000;transform:scaleX(0.958)">1/14/2019  9:43:50 AM</div>
<div class="t" style="left:227px;top:231px;color:#000;">File folder</div>
<div class="t" style="left:347px;top:231px;color:#000;transform:scaleX(0.958)">1/14/2019  4:21:21 PM</div>
<div class="t" style="left:227px;top:250px;color:#000;">File folder</div>
<div class="t" style="left:347px;top:250px;color:#000;transform:scaleX(0.958)">1/14/2019  9:44:00 AM</div>
<div class="t" style="left:227px;top:269px;color:#000;">File folder</div>
<div class="t" style="left:347px;top:269px;color:#000;transform:scaleX(0.958)">1/25/2019  8:02:45 PM</div>
<div class="t" style="left:227px;top:288px;color:#000;">File folder</div>
<div class="t" style="left:347px;top:288px;color:#000;transform:scaleX(0.958)">1/14/2019  9:48:20 AM</div>
<div class="t" style="left:227px;top:307px;color:#000;">File folder</div>
<div class="t" style="left:347px;top:307px;color:#000;transform:scaleX(0.958)">1/14/2019  9:49:08 AM</div>
<div class="t" style="left:227px;top:326px;color:#000;">File folder</div>
<div class="t" style="left:347px;top:326px;color:#000;transform:scaleX(0.958)">1/14/2019  9:49:20 AM</div>
<div class="t" style="left:227px;top:345px;color:#000;">File folder</div>
<div class="t" style="left:347px;top:345px;color:#000;transform:scaleX(0.958)">1/14/2019  9:49:22 AM</div>
<div class="t" style="left:227px;top:364px;color:#000;">File folder</div>
<div class="t" style="left:347px;top:364px;color:#000;transform:scaleX(0.958)">1/14/2019  9:49:22 AM</div>
<div class="t" style="left:227px;top:383px;color:#000;">File folder</div>
<div class="t" style="left:347px;top:383px;color:#000;transform:scaleX(0.958)">1/14/2019  9:49:23 AM</div>
<div class="t" style="left:227px;top:402px;color:#000;">File folder</div>
<div class="t" style="left:347px;top:402px;color:#000;transform:scaleX(0.958)">1/14/2019  4:21:29 PM</div>
<div class="t" style="left:227px;top:421px;color:#000;">File folder</div>
<div class="t" style="left:347px;top:421px;color:#000;transform:scaleX(0.958)">1/14/2019  9:49:55 AM</div>
<div class="t" style="left:227px;top:440px;color:#000;">File folder</div>
<div class="t" style="left:347px;top:440px;color:#000;transform:scaleX(0.958)">1/14/2019  9:49:55 AM</div>
<div class="t" style="left:227px;top:459px;color:#000;">File folder</div>
<div class="t" style="left:347px;top:459px;color:#000;transform:scaleX(0.958)">2/22/2019  2:20:42 PM</div>
<div class="t" style="left:227px;top:478px;color:#000;">File folder</div>
<div class="t" style="left:347px;top:478px;color:#000;transform:scaleX(0.958)">1/14/2019  9:49:57 AM</div>
<div class="t" style="left:227px;top:497px;color:#000;">File folder</div>
<div class="t" style="left:347px;top:497px;color:#000;transform:scaleX(0.958)">1/14/2019  9:49:58 AM</div>
<div class="t" style="left:227px;top:516px;color:#000;">File folder</div>
<div class="t" style="left:347px;top:516px;color:#000;transform:scaleX(0.958)">1/14/2019  9:55:17 AM</div>
</div>
<div class="a" style="left:24px;top:217px;width:4px;height:507px;overflow:hidden">
<div class="t" style="left:0px;top:3px;color:#000;">A</div>
<div class="t" style="left:0px;top:22px;color:#000;">A</div>
<div class="t" style="left:0px;top:41px;color:#000;">B</div>
<div class="t" style="left:0px;top:60px;color:#000;">C</div>
<div class="t" style="left:0px;top:79px;color:#000;">D</div>
<div class="t" style="left:0px;top:98px;color:#000;">c</div>
<div class="t" style="left:0px;top:117px;color:#000;">D</div>
<div class="t" style="left:0px;top:136px;color:#000;">E</div>
<div class="t" style="left:0px;top:155px;color:#000;">f</div>
<div class="t" style="left:0px;top:174px;color:#000;">f</div>
<div class="t" style="left:0px;top:193px;color:#000;">F</div>
<div class="t" style="left:0px;top:212px;color:#000;">F</div>
<div class="t" style="left:0px;top:231px;color:#000;">I</div>
<div class="t" style="left:0px;top:250px;color:#000;">I</div>
<div class="t" style="left:0px;top:269px;color:#000;">i</div>
<div class="t" style="left:0px;top:288px;color:#000;">J</div>
<div class="t" style="left:0px;top:307px;color:#000;">L</div>
<div class="t" style="left:0px;top:326px;color:#000;">M</div>
<div class="t" style="left:0px;top:345px;color:#000;">M</div>
<div class="t" style="left:0px;top:364px;color:#000;">P</div>
<div class="t" style="left:0px;top:383px;color:#000;">S</div>
<div class="t" style="left:0px;top:402px;color:#000;">S</div>
<div class="t" style="left:0px;top:421px;color:#000;">S</div>
<div class="t" style="left:0px;top:440px;color:#000;">S</div>
<div class="t" style="left:0px;top:459px;color:#000;">T</div>
<div class="t" style="left:0px;top:478px;color:#000;">T</div>
<div class="t" style="left:0px;top:497px;color:#000;">V</div>
</div>
<div class="a" style="left:25px;top:210px;width:1px;height:2px;background:#000"></div>
<div class="a" style="left:28px;top:210px;width:1px;height:2px;background:#000"></div>
<div class="a" style="left:28px;top:389px;width:125px;height:338px;background:#fff"></div>
<div class="a" style="left:659px;top:174px;width:16px;height:549px;background:#f0f0f0"></div>
<div class="a" style="left:659px;top:191px;width:16px;height:296px;background:#cdcdcd"></div>
<svg class="a" style="left:662px;top:177px" width="9" height="8" viewBox="0 0 9 8"><path d="M1 6L4.5 2.5 8 6" fill="none" stroke="#555" stroke-width="2"/></svg>
<svg class="a" style="left:662px;top:711px" width="9" height="8" viewBox="0 0 9 8"><path d="M1 1.5L4.5 5 8 1.5" fill="none" stroke="#555" stroke-width="2"/></svg>
<div class="a" style="left:684px;top:99px;width:168px;height:24px;background:#f4f4f4"></div>
<div class="a" style="left:855px;top:99px;width:78px;height:24px;background:#f4f4f4"></div>
<div class="a" style="left:936px;top:99px;width:26px;height:24px;background:#f4f4f4"></div>
<div class="a" style="left:686px;top:104px;width:3px;height:1px;background:#a9a9a9"></div>
<div class="a" style="left:686px;top:106px;width:3px;height:1px;background:#a9a9a9"></div>
<div class="a" style="left:686px;top:108px;width:3px;height:1px;background:#a9a9a9"></div>
<div class="a" style="left:686px;top:110px;width:3px;height:1px;background:#a9a9a9"></div>
<div class="a" style="left:686px;top:112px;width:3px;height:1px;background:#a9a9a9"></div>
<div class="a" style="left:686px;top:114px;width:3px;height:1px;background:#a9a9a9"></div>
<div class="a" style="left:686px;top:116px;width:3px;height:1px;background:#a9a9a9"></div>
<div class="a" style="left:686px;top:118px;width:3px;height:1px;background:#a9a9a9"></div>
<div class="a" style="left:691px;top:101px;width:113px;height:21px;background:#fff"></div>
<div class="a" style="left:793px;top:102px;width:10px;height:18px;background:#f0f0f0"></div>
<svg class="a" style="left:796px;top:110px" width="5" height="3" viewBox="0 0 5 3"><path d="M0 0H5L2.5 3Z" fill="#000"/></svg>
<svg class="a" style="left:695px;top:104px" width="14" height="17" viewBox="0 0 14 17"><rect x="0.5" y="0.5" width="11.5" height="15" fill="#fde48f" stroke="#e8c24e"/><rect x="10.5" y="9.5" width="2.5" height="6" fill="#fde48f" stroke="#e8c24e"/></svg>
<div class="t" style="left:712px;top:105px;color:#000;transform:scaleX(1.0182);">dwage</div>
<svg class="a" style="left:808px;top:103px" width="18" height="17" viewBox="0 0 18 17"><path d="M0.5 4.5H5L6.5 3H12.5V15.5H0.5Z" fill="#d0d0d0" stroke="#a8a8a8"/><path d="M0.5 15.5L3 8.5H16.5L13.5 15.5Z" fill="#dedede" stroke="#a8a8a8"/><path d="M8 5Q9 1 14 2V0L17 3 14 6V4Q11 3.5 10 6Z" fill="#b8b8b8"/></svg>
<svg class="a" style="left:832px;top:104px" width="17" height="16" viewBox="0 0 17 16"><rect x="0.5" y="0.5" width="15" height="14" fill="#f4f4f4" stroke="#a8a8a8"/><rect x="1" y="1" width="14" height="1.5" fill="#d8d8d8"/><path d="M3.5 4.5H12.5L9 9V12.5H7V9Z" fill="#f0f0f0" stroke="#c8c8c8" stroke-width="1.2" stroke-linejoin="round"/></svg>
<div class="a" style="left:858px;top:104px;width:3px;height:1px;background:#a9a9a9"></div>
<div class="a" style="left:858px;top:106px;width:3px;height:1px;background:#a9a9a9"></div>
<div class="a" style="left:858px;top:108px;width:3px;height:1px;background:#a9a9a9"></div>
<div class="a" style="left:858px;top:110px;width:3px;height:1px;background:#a9a9a9"></div>
<div class="a" style="left:858px;top:112px;width:3px;height:1px;background:#a9a9a9"></div>
<div class="a" style="left:858px;top:114px;width:3px;height:1px;background:#a9a9a9"></div>
<div class="a" style="left:858px;top:116px;width:3px;height:1px;background:#a9a9a9"></div>
<div class="a" style="left:858px;top:118px;width:3px;height:1px;background:#a9a9a9"></div>
<svg class="a" style="left:865px;top:106px" width="16" height="11" viewBox="0 0 16 11"><path d="M0.5 5.2L8 0.5V3.5H15.5V7H8V10Z" fill="#d6d6d6" stroke="#c2c2c2" stroke-width="0.8" stroke-linejoin="round"/></svg>
<svg class="a" style="left:888px;top:111px" width="5" height="3" viewBox="0 0 5 3"><path d="M0 0H5L2.5 3Z" fill="#b4b4b4"/></svg>
<svg class="a" style="left:900px;top:106px" width="16" height="11" viewBox="0 0 16 11"><path d="M15.5 5.2L8 0.5V3.5H0.5V7H8V10Z" fill="#d6d6d6" stroke="#c2c2c2" stroke-width="0.8" stroke-linejoin="round"/></svg>
<svg class="a" style="left:923px;top:111px" width="5" height="3" viewBox="0 0 5 3"><path d="M0 0H5L2.5 3Z" fill="#b4b4b4"/></svg>
<div class="a" style="left:938px;top:104px;width:3px;height:1px;background:#a9a9a9"></div>
<div class="a" style="left:938px;top:106px;width:3px;height:1px;background:#a9a9a9"></div>
<div class="a" style="left:938px;top:108px;width:3px;height:1px;background:#a9a9a9"></div>
<div class="a" style="left:938px;top:110px;width:3px;height:1px;background:#a9a9a9"></div>
<div class="a" style="left:938px;top:112px;width:3px;height:1px;background:#a9a9a9"></div>
<div class="a" style="left:938px;top:114px;width:3px;height:1px;background:#a9a9a9"></div>
<div class="a" style="left:938px;top:116px;width:3px;height:1px;background:#a9a9a9"></div>
<div class="a" style="left:938px;top:118px;width:3px;height:1px;background:#a9a9a9"></div>
<svg class="a" style="left:945px;top:104px" width="17" height="15" viewBox="0 0 17 15"><path d="M0.5 2.5H6L7.5 1H15.5V14.5H0.5Z" fill="#d6d6d6" stroke="#aaa"/><rect x="0.5" y="5.5" width="15" height="9" fill="#e6e6e6" stroke="#aaa"/><path d="M4 9L6 7V11H12" fill="none" stroke="#999" stroke-width="1.3"/></svg>
<div class="a" style="left:684px;top:125px;width:278px;height:25px;background:#f4f4f4"></div>
<div class="a" style="left:686px;top:131px;width:3px;height:1px;background:#a9a9a9"></div>
<div class="a" style="left:686px;top:133px;width:3px;height:1px;background:#a9a9a9"></div>
<div class="a" style="left:686px;top:135px;width:3px;height:1px;background:#a9a9a9"></div>
<div class="a" style="left:686px;top:137px;width:3px;height:1px;background:#a9a9a9"></div>
<div class="a" style="left:686px;top:139px;width:3px;height:1px;background:#a9a9a9"></div>
<div class="a" style="left:686px;top:141px;width:3px;height:1px;background:#a9a9a9"></div>
<div class="a" style="left:686px;top:143px;width:3px;height:1px;background:#a9a9a9"></div>
<svg class="a" style="left:693px;top:130px" width="17" height="17" viewBox="0 0 17 17"><path d="M0.5 4.5H8.5V15.5H0.5Z" fill="#efefef" stroke="#b8b8b8"/><path d="M2 7.5H6M2 9.5H7M2 11.5H7M2 13.5H7" stroke="#c6c6c6"/><path d="M6.5 0.5H12.5L15.5 3.5V14.5H6.5Z" fill="#f2f2f2" stroke="#b8b8b8"/><path d="M12.5 0.5V3.5H15.5" fill="none" stroke="#c0c0c0"/><path d="M8 3.5H11M8 5.5H14M8 7.5H14" stroke="#c6c6c6"/><path d="M8.5 15.2L13 10.7" stroke="#b2b2b2" stroke-width="2.6"/><path d="M10.5 8.8H15.5V13.8Z" fill="#b2b2b2"/></svg>
<div class="t" style="left:714px;top:131px;color:#a0a0a0;transform:scaleX(1.0119);">Download</div>
<svg class="a" style="left:776px;top:137px" width="5" height="3" viewBox="0 0 5 3"><path d="M0 0H5L2.5 3Z" fill="#a0a0a0"/></svg>
<div class="a" style="left:789px;top:127px;width:1px;height:21px;background:#bcbcbc"></div>
<svg class="a" style="left:794px;top:130px" width="17" height="17" viewBox="0 0 17 17"><rect x="0.5" y="2.5" width="13" height="13" fill="#f0f0f0" stroke="#b4b4b4"/><path d="M4 13L5 10 14 1 16 3 7 12Z" fill="#d8d8d8" stroke="#a8a8a8"/></svg>
<div class="t" style="left:816px;top:131px;color:#a0a0a0;transform:scaleX(1.0667);">Edit</div>
<svg class="a" style="left:845px;top:137px" width="5" height="3" viewBox="0 0 5 3"><path d="M0 0H5L2.5 3Z" fill="#a0a0a0"/></svg>
<svg class="a" style="left:855px;top:130px" width="16" height="16" viewBox="0 0 16 16"><path d="M2 2L14 14M14 2L2 14" stroke="#a6a6a6" stroke-width="3"/></svg>
<svg class="a" style="left:877px;top:129px" width="17" height="17" viewBox="0 0 17 17"><rect x="0.5" y="9.5" width="15" height="7" fill="#f2f2f2" stroke="#b4b4b4"/><path d="M3 11.5H5M4 11.5V14.5M3 14.5H5" stroke="#a8a8a8"/><path d="M7 15.5L7.6 12 13.6 1.8 15.8 3.1 9.8 13.3Z" fill="#e2e2e2" stroke="#a8a8a8" stroke-width="0.9" stroke-linejoin="round"/></svg>
<svg class="a" style="left:900px;top:130px" width="17" height="17" viewBox="0 0 17 17"><path d="M0.5 0.5H8.5L11.5 3.5V14.5H0.5Z" fill="#f4f4f4" stroke="#b4b4b4"/><rect x="6.5" y="7.5" width="9" height="9" fill="#f4f4f4" stroke="#b4b4b4"/><path d="M8.5 11.5L10.5 13.5 14 9.5" fill="none" stroke="#a8a8a8" stroke-width="1.2"/></svg>
<div class="t" style="left:922px;top:131px;color:#a0a0a0;transform:scaleX(0.9869);">Properties</div>
<div class="a" style="left:682px;top:151px;width:280px;height:21px;background:#bfcddb"></div>
<div class="t" style="left:687px;top:155px;color:#000;transform:scaleX(1.0888);">/home/dwage/</div>
<div class="a" style="left:682px;top:172px;width:280px;height:1px;background:#737a85"></div>
<div class="a" style="left:682px;top:173px;width:280px;height:552px;background:#fff"></div>
<div class="a" style="left:682px;top:172px;width:1px;height:553px;background:#737a85"></div>
<div class="a" style="left:682px;top:724px;width:280px;height:1px;background:#737a85"></div>
<div class="a" style="left:833px;top:174px;width:1px;height:24px;background:#e5e5e5"></div>
<div class="a" style="left:903px;top:174px;width:1px;height:24px;background:#e5e5e5"></div>
<div class="t" style="left:689px;top:179px;color:#000;">Name</div>
<svg class="a" style="left:756px;top:174px" width="8" height="5" viewBox="0 0 8 5"><path d="M0.5 4.5L4 1 7.5 4.5" fill="none" stroke="#555" stroke-width="1.1"/></svg>
<div class="t" style="left:878px;top:179px;color:#000;transform:scaleX(0.8503);">Size</div>
<div class="t" style="left:909px;top:179px;color:#000;transform:scaleX(0.9849);">Changed</div>
<div class="a" style="left:685px;top:198px;width:1px;height:526px;background:#c4dcfa"></div>
<div class="a" style="left:833px;top:198px;width:1px;height:526px;background:#eef4fc"></div>
<div class="a" style="left:903px;top:198px;width:1px;height:526px;background:#eef4fc"></div>
<svg class="a" style="left:690px;top:199px" width="14" height="17" viewBox="0 0 14 17"><rect x="0.5" y="0.5" width="11.5" height="15" fill="#fde590" stroke="#e9c24a"/><rect x="10.5" y="9.5" width="2.5" height="6" fill="#fde590" stroke="#e9c24a"/><rect x="1" y="1" width="10.5" height="2" fill="#fdeaa8"/><path d="M3.5 9V12.5H9" fill="none" stroke="#2e3440" stroke-width="1.5"/><path d="M1 9.8L3.5 7 6 9.8Z" fill="#2e3440"/></svg>
<div class="a" style="left:707px;top:210px;width:1px;height:2px;background:#000"></div>
<div class="a" style="left:710px;top:210px;width:1px;height:2px;background:#000"></div>
<div class="t" style="left:910px;top:201px;color:#000;transform:scaleX(0.958)">9/6/2018  12:00:00 PM</div>
<div class="t" style="left:4px;top:730px;color:#000;transform:scaleX(0.9535);">0 B of 6.27 MB in 0 of 46</div>
<div class="t" style="left:629px;top:730px;color:#000;transform:scaleX(0.9768);">1 hidden</div>
<div class="t" style="left:686px;top:730px;color:#000;transform:scaleX(0.9618);">0 B of 0 B in 0 of 0</div>
<div class="a" style="left:510px;top:321px;width:340px;height:123px;background:#f0f0f0;box-sizing:border-box;border:1px solid #cfcfcf"></div>
<div class="a" style="left:511px;top:322px;width:338px;height:25px;background:#d9d9d9"></div>
<div class="t" style="left:514px;top:327px;color:#000;transform:scaleX(0.9799);">Create folder</div>
<div class="t" style="left:776px;top:329px;color:#000;font-size:15px;top:327px">?</div>
<svg class="a" style="left:820px;top:329px" width="11" height="11" viewBox="0 0 11 11"><path d="M0.5 0.5L10.5 10.5M10.5 0.5L0.5 10.5" stroke="#111" stroke-width="1.1"/></svg>
<div class="t" style="left:519px;top:355px;color:#000;transform:scaleX(0.9135);">New folder name:</div>
<div class="a" style="left:543px;top:367px;width:5px;height:1px;background:#000"></div>
<div class="a" style="left:519px;top:372px;width:321px;height:21px;background:#fff;box-sizing:border-box;border:1px solid #0078d7"></div>
<div class="a" style="left:522px;top:375px;width:52px;height:14px;background:#0078d7"></div>
<div class="t" style="left:522px;top:375px;color:#fff;transform:scaleX(0.9227);">New folder</div>
<div class="a" style="left:574px;top:375px;width:1px;height:14px;background:#e07000"></div>
<div class="a" style="left:603px;top:410px;width:73px;height:23px;background:#e1e1e1;box-sizing:border-box;border:2px solid #0078d7"></div>
<div class="t" style="left:632px;top:415px;color:#000;transform:scaleX(0.8566);">OK</div>
<div class="a" style="left:683px;top:410px;width:73px;height:23px;background:#e1e1e1;box-sizing:border-box;border:1px solid #adadad"></div>
<div class="t" style="left:702px;top:415px;color:#000;transform:scaleX(0.8801);">Cancel</div>
<div class="a" style="left:764px;top:410px;width:73px;height:23px;background:#e1e1e1;box-sizing:border-box;border:1px solid #adadad"></div>
<div class="t" style="left:790px;top:415px;color:#000;transform:scaleX(0.8443);">Help</div>
<div class="a" style="left:790px;top:427px;width:7px;height:1px;background:#000"></div>
</body></html>
